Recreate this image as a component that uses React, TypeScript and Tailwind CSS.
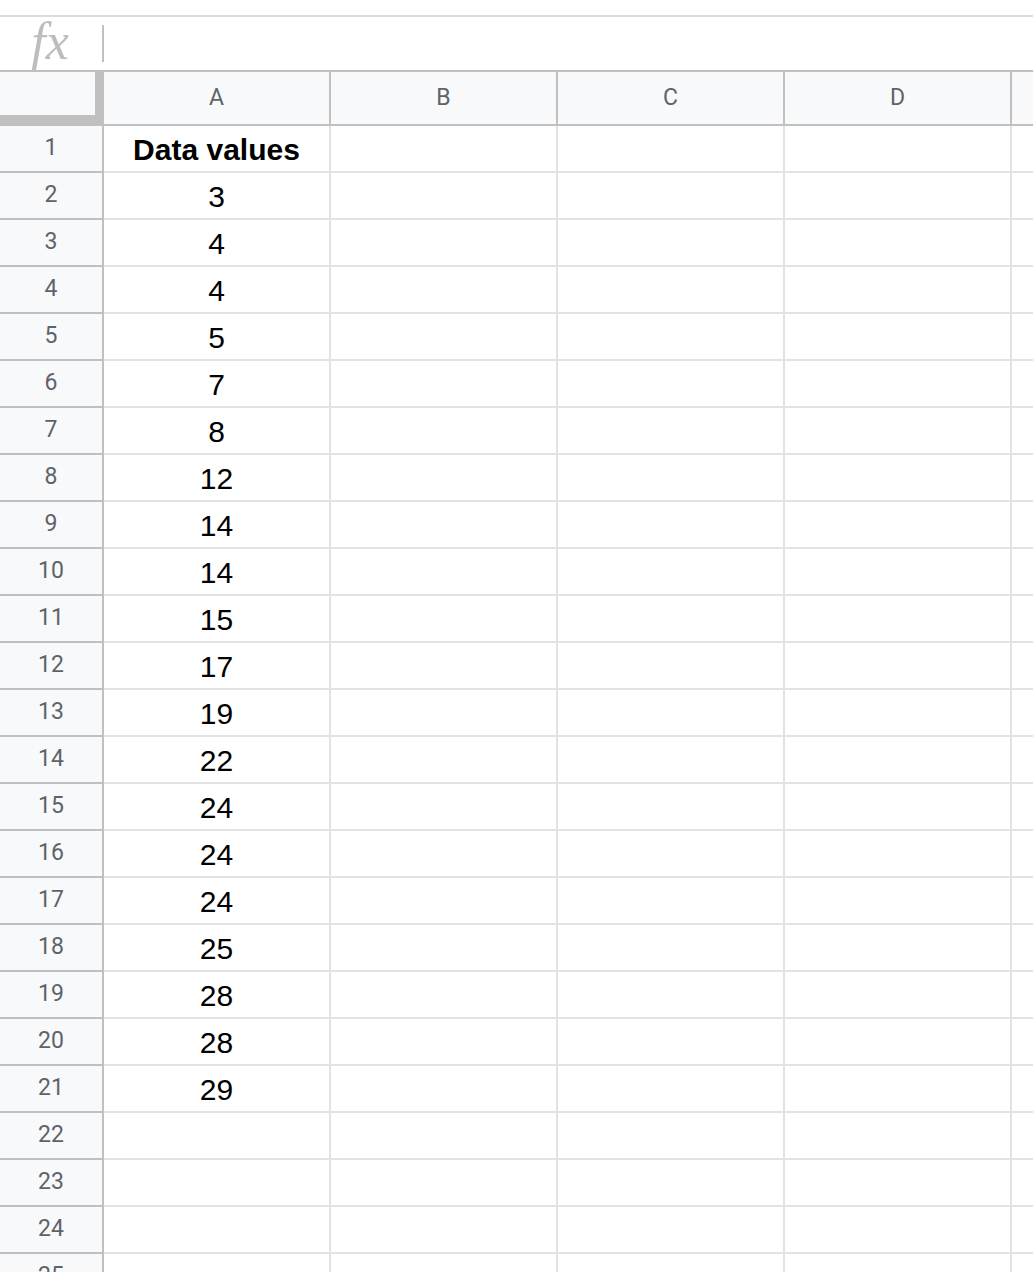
const columns = ["A", "B", "C", "D", "E"];

const values: (number | string)[] = [
  "Data values",
  3, 4, 4, 5, 7, 8, 12, 14, 14, 15, 17, 19, 22, 24, 24, 24, 25, 28, 28, 29,
];

const rowCount = 25;

const FormulaBar = () => (
  <div className="h-[55px] border-t-2 border-[#dadce0] flex items-center">
    <div className="w-[100px] shrink-0 flex justify-center">
      <span className="font-['Liberation_Serif',serif] italic text-[52px] leading-none text-[#bdbdbd] -mt-1">
        fx
      </span>
    </div>
    <div className="w-[2px] h-[37px] ml-[2px] bg-[#c0c0c0]" />
  </div>
);

const HeaderRow = () => (
  <div className="flex h-[56px] border-y-2 border-[#c0c0c0] bg-[#f8f9fa]">
    <div className="w-[104px] shrink-0 border-r-[9px] border-b-[9px] border-[#c0c0c0]" />
    {columns.map((col) => (
      <div
        key={col}
        className="w-[227px] shrink-0 border-r-2 border-[#c0c0c0] flex items-center justify-center text-[23px] text-[#5f6368]"
      >
        {col}
      </div>
    ))}
  </div>
);

const Row = ({ index }: { index: number }) => {
  const value = values[index - 1];
  const isHeading = index === 1;
  return (
    <div className="flex h-[47px]">
      <div className="w-[104px] shrink-0 bg-[#f8f9fa] border-r-2 border-b-2 border-[#c0c0c0] flex items-center justify-center text-[23px] text-[#5f6368]">
        {index}
      </div>
      {columns.map((col) => (
        <div
          key={col}
          className="w-[227px] shrink-0 border-r-2 border-b-2 border-[#e2e2e2] flex items-center justify-center font-['Liberation_Sans',Arial,sans-serif] text-black pt-[2px]"
        >
          {col === "A" && value !== undefined && (
            <span className={isHeading ? "text-[30px] font-bold" : "text-[30px]"}>
              {value}
            </span>
          )}
        </div>
      ))}
    </div>
  );
};

export default function App() {
  return (
    <div className="w-[1033px] h-[1272px] overflow-hidden bg-white font-['Roboto',sans-serif]">
      <div className="h-[15px]" />
      <FormulaBar />
      <HeaderRow />
      {Array.from({ length: rowCount }, (_, i) => (
        <Row key={i} index={i + 1} />
      ))}
    </div>
  );
}
